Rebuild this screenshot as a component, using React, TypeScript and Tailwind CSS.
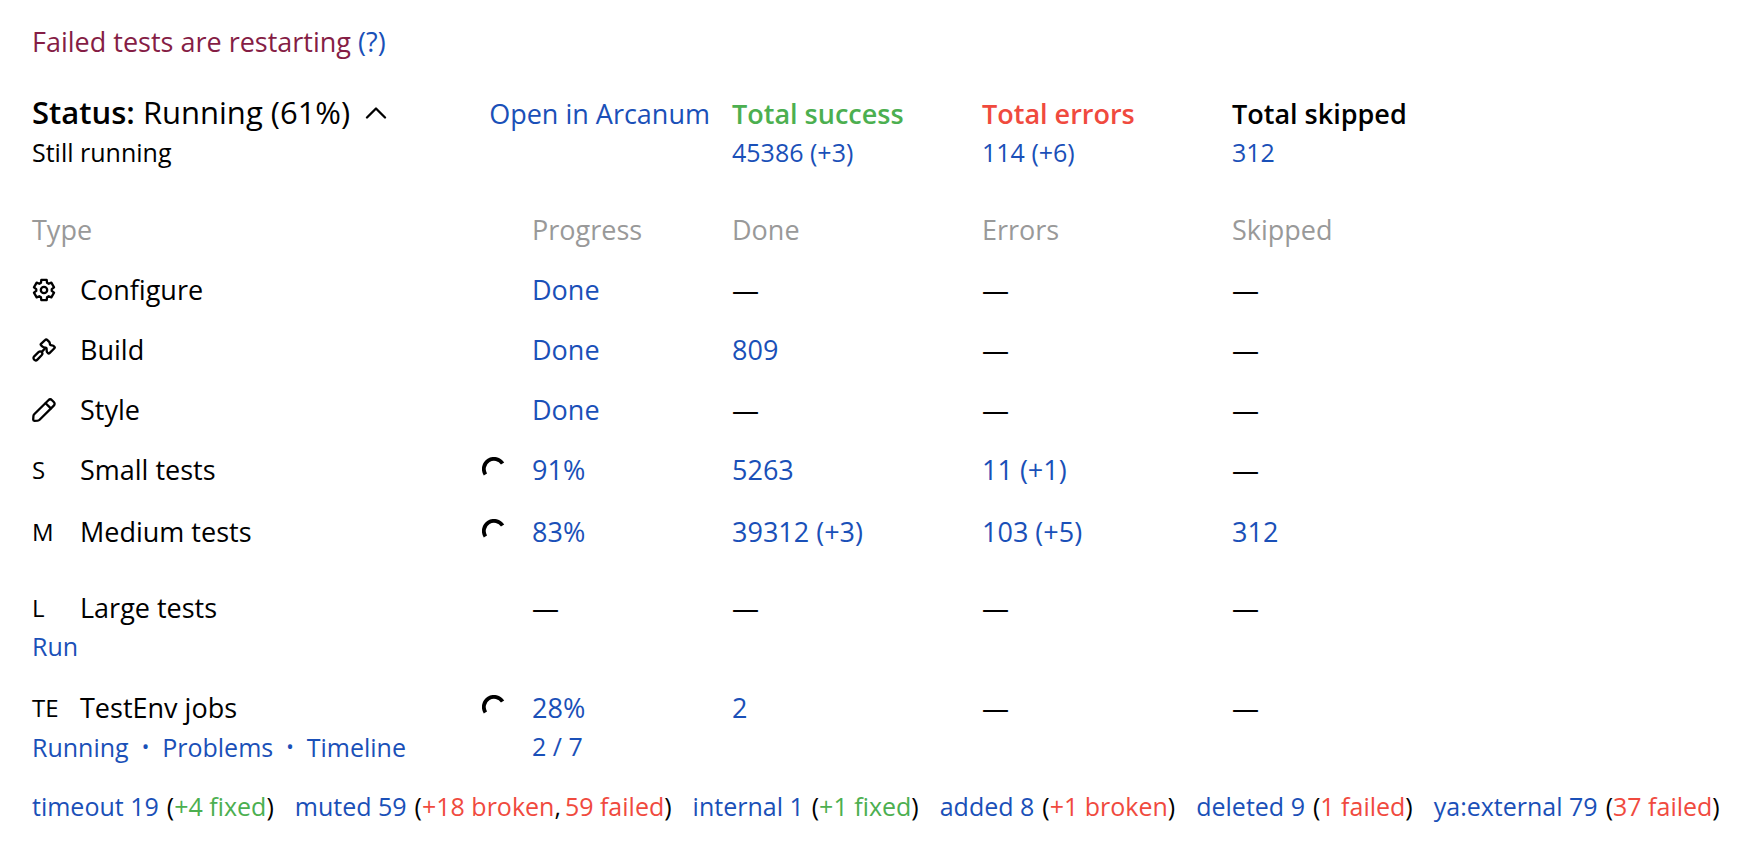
import type { ReactNode } from "react";

function gearPath(): string {
  const points: string[] = [];
  const at = (radius: number, degrees: number) => {
    const a = ((degrees - 90) * Math.PI) / 180;
    points.push(`${(12 + radius * Math.cos(a)).toFixed(2)} ${(12 + radius * Math.sin(a)).toFixed(2)}`);
  };
  for (let tooth = 0; tooth < 6; tooth += 1) {
    const centre = tooth * 60;
    at(7.8, centre - 23);
    at(10.4, centre - 15);
    at(10.4, centre + 15);
    at(7.8, centre + 23);
  }
  return `M${points.join("L")}Z`;
}

function Icon({ children }: { children: ReactNode }) {
  return (
    <svg
      className="size-6"
      viewBox="0 0 24 24"
      fill="none"
      stroke="currentColor"
      strokeWidth="2.3"
      strokeLinecap="round"
      strokeLinejoin="round"
      aria-hidden="true"
    >
      {children}
    </svg>
  );
}

const GearIcon = () => (
  <Icon>
    <path d={gearPath()} />
    <circle cx="12" cy="12" r="3.2" />
  </Icon>
);

const HammerIcon = () => (
  <Icon>
    <path d="M13 2.1 9 5.8c-.5.5-.4 1 .1 1.5l1.700 1.500c.5.500 1 .6 1.700.7l1.300.1c.6.1.8.4.8 1l.1 2.400c0 .7.200 1 .7 1.500l.6.6c.5.500 1 .500 1.500 0l4.900-4.900c.5-.5.4-1 0-1.400l-1.200-1.100c-.4-.4-.8-.4-1.400-.4-1.300 0-1.900-.3-2-1.600 0-.8-.1-1.300-.6-1.800l-1.800-1.800c-.8-.8-1.600-.8-2.400 0Z" />
    <path d="m13.200 10.300-3.200 3.300" />
    <path d="m2.200 18.300 4.300-4.100c1.100-1 2.300-1 3.200-.1.900.9.900 2.100-.1 3.200l-4.200 4.300c-1 1-2.300 1-3.200.1-1-.9-1-2.300 0-3.400Z" />
  </Icon>
);

const PencilIcon = () => (
  <Icon>
    <path d="M2.200 16.300 16.400 2.200c1.100-1.100 2.500-1.100 3.600 0l1.800 1.800c1.100 1.100 1.100 2.500 0 3.600L7.600 21.700c-.6.6-1.100.8-1.900.9l-3.300.2c-.8 0-1.200-.4-1.200-1.200l.2-3.400c0-.8.200-1.300.8-1.900Z" />
    <path d="m13.600 5.200 5.200 5.200" />
  </Icon>
);

const Spinner = () => (
  <svg className="size-6" viewBox="0 0 24 24" fill="none" stroke="currentColor" strokeWidth="3.8" role="img" aria-label="In progress">
    <path d="M20.600 6.600A10 10 0 0 0 3.400 17.400" />
  </svg>
);

function Link({ children }: { children: ReactNode }) {
  return (
    <a href="#" className="text-[#1a50b8] hover:underline">
      {children}
    </a>
  );
}

const Value = ({ text }: { text: string }) => (text === "—" ? <>—</> : <Link>{text}</Link>);

type Row = {
  mark: ReactNode;
  name: string;
  progress: string;
  detail?: string;
  links?: string[];
  running?: boolean;
  done: string;
  errors: string;
  skipped: string;
  spacing: string;
};

const rows: Row[] = [
  { mark: <GearIcon />, name: "Configure", progress: "Done", done: "—", errors: "—", skipped: "—", spacing: "*:py-[10px]" },
  { mark: <HammerIcon />, name: "Build", progress: "Done", done: "809", errors: "—", skipped: "—", spacing: "*:py-[10px]" },
  { mark: <PencilIcon />, name: "Style", progress: "Done", done: "—", errors: "—", skipped: "—", spacing: "*:py-[10px]" },
  { mark: "S", name: "Small tests", progress: "91%", running: true, done: "5263", errors: "11 (+1)", skipped: "—", spacing: "*:pt-[10px] *:pb-3" },
  { mark: "M", name: "Medium tests", progress: "83%", running: true, done: "39312 (+3)", errors: "103 (+5)", skipped: "312", spacing: "*:pt-[10px] *:pb-3" },
  { mark: "L", name: "Large tests", progress: "—", links: ["Run"], done: "—", errors: "—", skipped: "—", spacing: "*:pt-6" },
  {
    mark: "TE",
    name: "TestEnv jobs",
    progress: "28%",
    detail: "2 / 7",
    links: ["Running", "Problems", "Timeline"],
    running: true,
    done: "2",
    errors: "—",
    skipped: "—",
    spacing: "*:pt-6",
  },
];

type Change = { text: string; good?: boolean };

const tags: { name: string; changes: Change[] }[] = [
  { name: "timeout 19", changes: [{ text: "+4 fixed", good: true }] },
  { name: "muted 59", changes: [{ text: "+18 broken" }, { text: "59 failed" }] },
  { name: "internal 1", changes: [{ text: "+1 fixed", good: true }] },
  { name: "added 8", changes: [{ text: "+1 broken" }] },
  { name: "deleted 9", changes: [{ text: "1 failed" }] },
  { name: "ya:external 79", changes: [{ text: "37 failed" }] },
];

function Total({ title, value, color }: { title: string; value: string; color: string }) {
  return (
    <div>
      <h2 className={`font-semibold ${color}`}>{title}</h2>
      <p className="text-[25px] leading-[36px]">
        <Link>{value}</Link>
      </p>
    </div>
  );
}

export default function App() {
  return (
    <main className="min-h-screen bg-white px-8 pt-[22px] pb-4 font-['Open_Sans','Noto_Sans',sans-serif] text-[27px] leading-[40px] whitespace-nowrap text-black">
      <p className="text-[#851d45]">
        Failed tests are restarting <Link>(?)</Link>
      </p>

      <header className="mt-[30px] grid grid-cols-[678px_228px_228px_1fr] items-baseline gap-x-[22px]">
        <div>
          <div className="flex items-baseline justify-between">
            <div className="flex items-center gap-[14px]">
              <h1 className="text-[31px]">
                <span className="font-semibold">Status:</span> Running (61%)
              </h1>
              <button type="button" aria-label="Collapse" className="cursor-pointer">
                <svg className="h-[14px] w-6" viewBox="0 0 24 14" fill="none" stroke="currentColor" strokeWidth="2.3" strokeLinecap="round" strokeLinejoin="round">
                  <path d="M3 12.500 12 3.500 21 12.500" />
                </svg>
              </button>
            </div>
            <Link>Open in Arcanum</Link>
          </div>
          <p className="text-[25px] leading-[36px]">Still running</p>
        </div>
        <Total title="Total success" value="45386 (+3)" color="text-[#4caf50]" />
        <Total title="Total errors" value="114 (+6)" color="text-[#f04a3e]" />
        <Total title="Total skipped" value="312" color="text-black" />
      </header>

      <table className="mt-[30px] w-full table-fixed text-left">
        <colgroup>
          <col className="w-[450px]" />
          <col className="w-[50px]" />
          <col className="w-[200px]" />
          <col className="w-[250px]" />
          <col className="w-[250px]" />
          <col />
        </colgroup>
        <thead className="text-[#999]">
          <tr className="*:py-[10px] *:font-normal">
            <th scope="col" colSpan={2}>Type</th>
            <th scope="col">Progress</th>
            <th scope="col">Done</th>
            <th scope="col">Errors</th>
            <th scope="col">Skipped</th>
          </tr>
        </thead>
        <tbody>
          {rows.map((row) => (
            <tr key={row.name} className={`align-top ${row.spacing}`}>
              <td>
                <div className="flex">
                  <span className="flex h-10 w-12 shrink-0 items-center text-[24px]">{row.mark}</span>
                  {row.name}
                </div>
                {row.links && (
                  <div className="flex gap-[13px] text-[25px] leading-[36px] text-[#1a50b8]">
                    {row.links.map((link, index) => (
                      <span key={link} className="flex items-center gap-[13px]">
                        {index > 0 && <span className="text-[20px] leading-[38px]">•</span>}
                        <Link>{link}</Link>
                      </span>
                    ))}
                  </div>
                )}
              </td>
              <td>
                {row.running && (
                  <div className="flex h-[38px] items-center">
                    <Spinner />
                  </div>
                )}
              </td>
              <td>
                <Value text={row.progress} />
                {row.detail && (
                  <div className="text-[25px] leading-[36px]">
                    <Link>{row.detail}</Link>
                  </div>
                )}
              </td>
              <td>
                <Value text={row.done} />
              </td>
              <td>
                <Value text={row.errors} />
              </td>
              <td>
                <Value text={row.skipped} />
              </td>
            </tr>
          ))}
        </tbody>
      </table>

      <ul className="mt-5 flex gap-[21px] text-[25px]">
        {tags.map((tag) => (
          <li key={tag.name} className="flex gap-2">
            <Link>{tag.name}</Link>
            <span className="flex">
              (
              {tag.changes.map((change, index) => (
                <span key={change.text} className="flex gap-1">
                  {index > 0 && <span>,</span>}
                  <span className={change.good ? "text-[#4caf50]" : "text-[#f04a3e]"}>{change.text}</span>
                </span>
              ))}
              )
            </span>
          </li>
        ))}
      </ul>
    </main>
  );
}
